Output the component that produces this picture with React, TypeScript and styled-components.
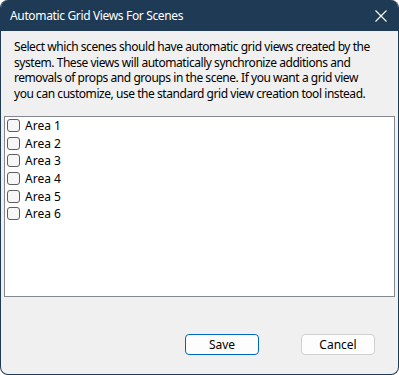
import styled, { createGlobalStyle } from "styled-components";

const GlobalStyle = createGlobalStyle`
  html, body {
    margin: 0;
    padding: 0;
    background: #ffffff;
  }
  * {
    box-sizing: border-box;
  }
`;

const Window = styled.div`
  width: 399px;
  height: 375px;
  display: flex;
  flex-direction: column;
  background: #f0f0f0;
  border: 1px solid #1f3a55;
  border-top: none;
  border-radius: 8px;
  overflow: hidden;
  font-family: "Noto Sans", "Open Sans", sans-serif;
  font-size: 12px;
  color: #000000;
`;

const TitleBar = styled.div`
  height: 31px;
  flex-shrink: 0;
  display: flex;
  align-items: center;
  justify-content: space-between;
  background: #1f3a55;
  color: #ffffff;
  padding: 0 9px 0 10px;
  margin: 0 -1px;
`;

const Title = styled.span`
  font-size: 12px;
  letter-spacing: -0.35px;
`;

const CloseButton = styled.button`
  width: 18px;
  height: 18px;
  padding: 0;
  border: none;
  background: transparent;
  display: flex;
  align-items: center;
  justify-content: center;
  cursor: pointer;
`;

const Body = styled.div`
  flex: 1;
  display: flex;
  flex-direction: column;
  padding: 8px 3px 0 3px;
`;

const Description = styled.p`
  margin: 0 0 15px 10px;
  line-height: 15.5px;
  letter-spacing: -0.45px;
`;

const Line = styled.span`
  display: block;
  white-space: nowrap;
`;

const SceneList = styled.div`
  height: 181px;
  background: #ffffff;
  border: 1px solid #828790;
  display: flex;
  flex-direction: column;
  padding: 0 0 0 2px;
`;

const SceneRow = styled.label`
  height: 17.6px;
  display: flex;
  align-items: center;
  gap: 5px;
`;

const Box = styled.span`
  width: 13px;
  height: 13px;
  border: 1px solid #5d5d5d;
  border-radius: 3px;
  background: #f7f7f7;
`;

const Footer = styled.div`
  display: flex;
  justify-content: flex-end;
  gap: 42px;
  padding: 37px 20px 0 0;
`;

const DialogButton = styled.button<{ $primary?: boolean }>`
  width: 74px;
  height: 21px;
  padding: 0;
  font-family: inherit;
  font-size: 12px;
  color: #000000;
  background: #fdfdfd;
  border: 1px solid ${({ $primary }) => ($primary ? "#0067c0" : "#d0d0d0")};
  border-radius: 4px;
`;

const scenes = ["Area 1", "Area 2", "Area 3", "Area 4", "Area 5", "Area 6"];

const descriptionLines = [
  "Select which scenes should have automatic grid views created by the",
  "system. These views will automatically synchronize additions and",
  "removals of props and groups in the scene. If you want a grid view",
  "you can customize, use the standard grid view creation tool instead.",
];

const App = () => {
  return (
    <>
      <GlobalStyle />
      <Window>
        <TitleBar>
          <Title>Automatic Grid Views For Scenes</Title>
          <CloseButton aria-label="Close">
            <svg width="12" height="12" viewBox="0 0 12 12">
              <path d="M0.5 0.5 L11.5 11.5 M11.5 0.5 L0.5 11.5" stroke="#ffffff" strokeWidth="1.1" />
            </svg>
          </CloseButton>
        </TitleBar>
        <Body>
          <Description>
            {descriptionLines.map((line) => (
              <Line key={line}>{line}</Line>
            ))}
          </Description>
          <SceneList>
            {scenes.map((scene) => (
              <SceneRow key={scene}>
                <Box />
                {scene}
              </SceneRow>
            ))}
          </SceneList>
          <Footer>
            <DialogButton $primary>Save</DialogButton>
            <DialogButton>Cancel</DialogButton>
          </Footer>
        </Body>
      </Window>
    </>
  );
};

export default App;
